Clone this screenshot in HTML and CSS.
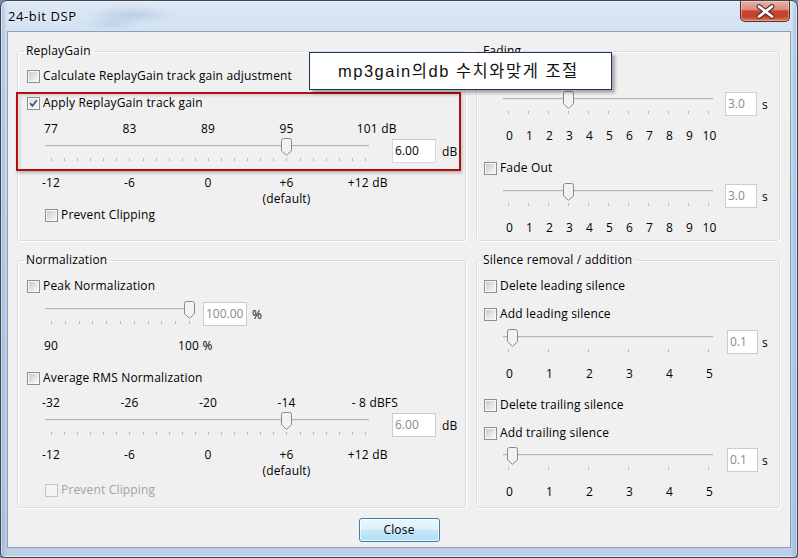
FILE: index.html
```html
<!DOCTYPE html>
<html>
<head>
<meta charset="utf-8">
<title>24-bit DSP</title>
<link rel="stylesheet" href="styles.css">
</head>
<body>
<div class="window">
  <div class="titlebar">
    <span class="title">24-bit DSP</span>
    <div class="xbtn">
      <svg width="50" height="20" viewBox="0 0 50 20">
        <path d="M19 5.5 L32 15.5 M32 5.5 L19 15.5" stroke="#4a2a26" stroke-width="4.8" stroke-linecap="round" fill="none"/>
        <path d="M19 5.5 L32 15.5 M32 5.5 L19 15.5" stroke="#ffffff" stroke-width="2.8" stroke-linecap="round" fill="none"/>
      </svg>
    </div>
  </div>

  <div class="client">
    <div class="groups">
      <!-- ReplayGain -->
      <fieldset class="group gl">
        <legend>ReplayGain</legend>
        <div class="cbrow mt9"><span class="cb"></span>Calculate ReplayGain track gain adjustment</div>
        <div class="cbrow mt11"><span class="cb on"><svg width="9" height="9" viewBox="0 0 9 9"><path d="M1.2 4.2 L3.4 6.8 L7.8 1.2" stroke="#3e4f8c" stroke-width="1.7" fill="none"/></svg></span>Apply ReplayGain track gain</div>
        <div class="scale sc-db mt10">
          <span>77</span><span>83</span><span>89</span><span>95</span><span class="last p31">101 dB</span>
        </div>
        <div class="sliderrow ind">
          <div class="slider sl-db">
            <div class="track"></div>
            <div class="ticks tk-db"></div>
            <svg class="thumb" style="left:236px" width="11" height="18" viewBox="0 0 11 18"><path d="M0.5 2.5 Q0.5 0.5 2.5 0.5 H8.5 Q10.5 0.5 10.5 2.5 V12.8 L5.5 17.3 L0.5 12.8 Z" fill="#f2f2f2" stroke="#8a8a8a"/></svg>
          </div>
          <div class="tbox tb-wide">6.00</div><span class="unit u6">dB</span>
        </div>
        <div class="scale sc-db mt12">
          <span>-12</span><span>-6</span><span>0</span><span>+6<br>(default)</span><span class="last p22">+12 dB</span>
        </div>
        <div class="cbrow ind"><span class="cb"></span>Prevent Clipping</div>
      </fieldset>

      <!-- Fading -->
      <fieldset class="group gr">
        <legend>Fading</legend>
        <div class="cbrow mt9"><span class="cb"></span>Fade In</div>
        <div class="sliderrow ind2 mt6">
          <div class="slider sl-s">
            <div class="track"></div>
            <div class="ticks tk-fade"></div>
            <svg class="thumb" style="left:60px" width="11" height="18" viewBox="0 0 11 18"><path d="M0.5 2.5 Q0.5 0.5 2.5 0.5 H8.5 Q10.5 0.5 10.5 2.5 V12.8 L5.5 17.3 L0.5 12.8 Z" fill="#f2f2f2" stroke="#8a8a8a"/></svg>
          </div>
          <div class="tbox tb-fade dis">3.0</div><span class="unit u5">s</span>
        </div>
        <div class="scale sc-fade mt12">
          <span>0</span><span>1</span><span>2</span><span>3</span><span>4</span><span>5</span><span>6</span><span>7</span><span>8</span><span>9</span><span>10</span>
        </div>
        <div class="cbrow mt16"><span class="cb"></span>Fade Out</div>
        <div class="sliderrow ind2 mt6">
          <div class="slider sl-s">
            <div class="track"></div>
            <div class="ticks tk-fade"></div>
            <svg class="thumb" style="left:60px" width="11" height="18" viewBox="0 0 11 18"><path d="M0.5 2.5 Q0.5 0.5 2.5 0.5 H8.5 Q10.5 0.5 10.5 2.5 V12.8 L5.5 17.3 L0.5 12.8 Z" fill="#f2f2f2" stroke="#8a8a8a"/></svg>
          </div>
          <div class="tbox tb-fade dis">3.0</div><span class="unit u5">s</span>
        </div>
        <div class="scale sc-fade mt12">
          <span>0</span><span>1</span><span>2</span><span>3</span><span>4</span><span>5</span><span>6</span><span>7</span><span>8</span><span>9</span><span>10</span>
        </div>
      </fieldset>

      <!-- Normalization -->
      <fieldset class="group gl">
        <legend>Normalization</legend>
        <div class="cbrow mt10"><span class="cb"></span>Peak Normalization</div>
        <div class="sliderrow ind mt6">
          <div class="slider sl-peak">
            <div class="track"></div>
            <div class="ticks tk-peak"></div>
            <svg class="thumb" style="left:139px" width="11" height="18" viewBox="0 0 11 18"><path d="M0.5 2.5 Q0.5 0.5 2.5 0.5 H8.5 Q10.5 0.5 10.5 2.5 V12.8 L5.5 17.3 L0.5 12.8 Z" fill="#f2f2f2" stroke="#8a8a8a"/></svg>
          </div>
          <div class="tbox tb-peak dis">100.00</div><span class="unit u5">%</span>
        </div>
        <div class="scale sc-peak mt12">
          <span>90</span><span class="last p58">100 %</span>
        </div>
        <div class="cbrow mt16"><span class="cb"></span>Average RMS Normalization</div>
        <div class="scale sc-db mt9">
          <span>-32</span><span>-26</span><span>-20</span><span>-14</span><span class="last p26">- 8 dBFS</span>
        </div>
        <div class="sliderrow ind">
          <div class="slider sl-db">
            <div class="track"></div>
            <div class="ticks tk-db"></div>
            <svg class="thumb" style="left:236px" width="11" height="18" viewBox="0 0 11 18"><path d="M0.5 2.5 Q0.5 0.5 2.5 0.5 H8.5 Q10.5 0.5 10.5 2.5 V12.8 L5.5 17.3 L0.5 12.8 Z" fill="#f2f2f2" stroke="#8a8a8a"/></svg>
          </div>
          <div class="tbox tb-wide dis">6.00</div><span class="unit u6">dB</span>
        </div>
        <div class="scale sc-db mt10">
          <span>-12</span><span>-6</span><span>0</span><span>+6<br>(default)</span><span class="last p22">+12 dB</span>
        </div>
        <div class="cbrow ind mt3 disabled"><span class="cb"></span>Prevent Clipping</div>
      </fieldset>

      <!-- Silence -->
      <fieldset class="group gr">
        <legend>Silence removal / addition</legend>
        <div class="cbrow mt10"><span class="cb"></span>Delete leading silence</div>
        <div class="cbrow mt12"><span class="cb"></span>Add leading silence</div>
        <div class="sliderrow ind2 mt6">
          <div class="slider sl-s">
            <div class="track"></div>
            <div class="ticks tk-sil"></div>
            <svg class="thumb" style="left:4px" width="11" height="18" viewBox="0 0 11 18"><path d="M0.5 2.5 Q0.5 0.5 2.5 0.5 H8.5 Q10.5 0.5 10.5 2.5 V12.8 L5.5 17.3 L0.5 12.8 Z" fill="#f2f2f2" stroke="#8a8a8a"/></svg>
          </div>
          <div class="tbox tb-sil dis">0.1</div><span class="unit u4">s</span>
        </div>
        <div class="scale sc-sil mt12">
          <span>0</span><span>1</span><span>2</span><span>3</span><span>4</span><span>5</span>
        </div>
        <div class="cbrow mt15"><span class="cb"></span>Delete trailing silence</div>
        <div class="cbrow mt12"><span class="cb"></span>Add trailing silence</div>
        <div class="sliderrow ind2 mt5">
          <div class="slider sl-s">
            <div class="track"></div>
            <div class="ticks tk-sil"></div>
            <svg class="thumb" style="left:4px" width="11" height="18" viewBox="0 0 11 18"><path d="M0.5 2.5 Q0.5 0.5 2.5 0.5 H8.5 Q10.5 0.5 10.5 2.5 V12.8 L5.5 17.3 L0.5 12.8 Z" fill="#f2f2f2" stroke="#8a8a8a"/></svg>
          </div>
          <div class="tbox tb-sil dis">0.1</div><span class="unit u4">s</span>
        </div>
        <div class="scale sc-sil mt12">
          <span>0</span><span>1</span><span>2</span><span>3</span><span>4</span><span>5</span>
        </div>
      </fieldset>
    </div>

    <div class="footer">
      <button class="btn">Close</button>
    </div>
  </div>

  <div class="highlight"></div>
  <div class="tooltip">mp3gain의db 수치와맞게 조절</div>
</div>
</body>
</html>
```

FILE: styles.css
```css
html, body {
  margin: 0;
  padding: 0;
}
body {
  width: 798px;
  height: 558px;
  overflow: hidden;
  font-family: "Open Sans", "Noto Sans", sans-serif;
  font-size: 12px;
  letter-spacing: 0.17px;
  line-height: 16px;
  color: #000;
  background: #6f8fb4;
}

.window {
  position: relative;
  box-sizing: border-box;
  width: 798px;
  height: 558px;
  border: 1px solid #3a4656;
  border-radius: 7px 7px 5px 5px;
  background:
    radial-gradient(ellipse 45px 9px at 130px 14px, rgba(140,165,195,0.35), rgba(140,165,195,0) 100%),
    radial-gradient(ellipse 30px 7px at 110px 23px, rgba(150,175,200,0.3), rgba(150,175,200,0) 100%),
    linear-gradient(90deg, rgba(90,125,170,0.35) 0, rgba(90,125,170,0) 6px, rgba(90,125,170,0) 790px, rgba(90,125,170,0.35) 796px),
    linear-gradient(180deg, #dbe7f5 0%, #cfdff1 8%, #c4d7ec 50%, #bcd1e8 100%);
  box-shadow: inset 0 0 0 1px rgba(255,255,255,0.55);
  overflow: hidden;
}

/* title bar */
.titlebar {
  height: 30px;
  display: flex;
  justify-content: space-between;
  align-items: flex-start;
}
.title {
  margin: 7px 0 0 7px;
  font-size: 13px;
  letter-spacing: 0.6px;
  line-height: 16px;
  color: #000;
  text-shadow: 0 0 6px rgba(255,255,255,0.9);
}
.xbtn {
  box-sizing: border-box;
  width: 50px;
  height: 21px;
  margin-right: 7px;
  border: 1px solid #5f2b24;
  border-top: none;
  border-radius: 0 0 5px 5px;
  background: linear-gradient(180deg, #eab0a3 0%, #de8d7b 42%, #c9442d 50%, #c2432c 78%, #da7a62 100%);
  box-shadow: inset 0 0 0 1px rgba(255,255,255,0.35);
}
.xbtn svg {
  display: block;
  margin-left: -1px;
}

/* client area */
.client {
  box-sizing: border-box;
  height: 517px;
  margin: 0 6px;
  border: 1px solid #8aa0b8;
  background: #f0f0f0;
  padding: 12px 10px 5px 9px;
}
.groups {
  display: grid;
  grid-template-columns: 449px 304px;
  grid-template-rows: 197px 255px;
  column-gap: 10px;
  row-gap: 12px;
}
.group {
  margin: 0;
  min-width: 0;
  border: 1px solid #d5dfe5;
  border-radius: 3px;
  padding: 1px 0 0 0;
  box-shadow: 1px 1px 0 #ffffff, inset 1px 1px 0 #ffffff;
}
.group legend {
  padding: 0 2px;
  margin-left: -3px;
  line-height: 14px;
  height: 14px;
}
.gl { padding-left: 9px; }
.gr { padding-left: 7px; }

/* checkbox rows */
.cbrow {
  display: flex;
  align-items: center;
  height: 16px;
  white-space: nowrap;
}
.cb {
  box-sizing: border-box;
  flex: none;
  width: 13px;
  height: 13px;
  margin-right: 3px;
  border: 1px solid #8e8f8f;
  padding: 1px;
  background: linear-gradient(135deg, #c9ccd1 0%, #eeeff0 80%, #f6f6f6 100%) content-box, #f7f7f7;
}
.cb svg { display: block; }
.cb.on {
  background: linear-gradient(135deg, #dfe2e6 0%, #f5f5f5 100%) content-box, #f7f7f7;
}
.disabled { color: #a3a3a3; }
.disabled .cb {
  border-color: #c3c3c3;
  background: #f4f4f4;
}

/* indentation */
.ind { margin-left: 18px; }
.ind2 { margin-left: 19px; }

/* spacing helpers */
.mt3 { margin-top: 3px; }
.mt5 { margin-top: 5px; }
.mt6 { margin-top: 6px; }
.mt9 { margin-top: 9px; }
.mt10 { margin-top: 10px; }
.mt11 { margin-top: 11px; }
.mt12 { margin-top: 12px; }
.mt15 { margin-top: 15px; }
.mt16 { margin-top: 16px; }

/* slider rows */
.sliderrow {
  display: flex;
  align-items: flex-start;
  height: 26px;
}
.slider {
  position: relative;
  flex: none;
  height: 26px;
}
.sl-db { width: 324px; }
.sl-peak { width: 149px; }
.sl-s { width: 210px; }
.track {
  margin-top: 8px;
  height: 1px;
  background: #b3b3b3;
  border-bottom: 1px solid #e6e6e6;
}
.ticks {
  margin-top: 11px;
  height: 3px;
}
.tk-db {
  margin-left: 6px;
  width: 315px;
  background: repeating-linear-gradient(to right, #b9b9b9 0 1px, transparent 1px 13.0833px);
}
.tk-peak {
  margin-left: 6px;
  width: 139px;
  background: repeating-linear-gradient(to right, #b9b9b9 0 1px, transparent 1px 13.8px);
}
.tk-fade {
  margin-left: 5px;
  width: 201px;
  background: repeating-linear-gradient(to right, #b9b9b9 0 1px, transparent 1px 20px);
}
.tk-sil {
  margin-left: 5px;
  width: 201px;
  background: repeating-linear-gradient(to right, #b9b9b9 0 1px, transparent 1px 40px);
}
.thumb {
  position: absolute;
  top: 1px;
  display: block;
}

.tbox {
  box-sizing: border-box;
  flex: none;
  height: 24px;
  margin-top: 2px;
  border: 1px solid #d7dadd;
  border-top-color: #c6c9cc;
  background: #fff;
  padding: 0 2px;
  line-height: 22px;
  letter-spacing: 0;
  color: #000;
}
.tbox.dis { color: #8a8a8a; border-color: #c9cdd1; }
.tb-wide { width: 44px; margin-left: 23px; }
.tb-peak { width: 44px; margin-left: 9px; }
.tb-fade { width: 32px; margin-left: 12px; }
.tb-sil { width: 31px; margin-left: 14px; }
.unit {
  margin-top: 3px;
  line-height: 24px;
}
.u6 { margin-left: 6px; }
.u5 { margin-left: 5px; }
.u4 { margin-left: 4px; }

/* scale labels */
.scale {
  display: grid;
  justify-items: center;
  line-height: 16px;
  white-space: nowrap;
}
.scale span { text-align: center; }
.scale .last { justify-self: start; text-align: left; }
.sc-db {
  margin-left: -15.25px;
  grid-template-columns: repeat(5, 78.5px);
}
.sc-peak {
  margin-left: -45px;
  grid-template-columns: repeat(2, 138px);
}
.sc-fade {
  margin-left: 15.5px;
  grid-template-columns: repeat(11, 20px);
}
.sc-sil {
  margin-left: 5.5px;
  grid-template-columns: repeat(6, 40px);
}
.p31 { padding-left: 31px; }
.p22 { padding-left: 22px; }
.p26 { padding-left: 26px; }
.p58 { padding-left: 58px; }

/* footer */
.footer {
  display: flex;
  justify-content: center;
  margin-top: 10px;
}
.btn {
  box-sizing: border-box;
  width: 81px;
  height: 24px;
  margin: 0 0 0 1px;
  padding: 0;
  border: 1px solid #3c7fb1;
  border-radius: 3px;
  background: linear-gradient(180deg, #ecf6fc 0%, #dcf0fb 48%, #c6e6f8 52%, #b3ddf4 100%);
  box-shadow: inset 0 0 0 1px rgba(255,255,255,0.7);
  font-family: "Open Sans", "Noto Sans", sans-serif;
  font-size: 12px;
  letter-spacing: 0.17px;
  line-height: 20px;
  color: #000;
}

/* annotation overlays */
.highlight {
  position: absolute;
  left: 15px;
  top: 91px;
  width: 445px;
  height: 79px;
  box-sizing: border-box;
  border: 2px solid #b30f12;
  box-shadow: 1px 2px 3px rgba(0,0,0,0.25), inset 2px 2px 3px rgba(0,0,0,0.12);
}
.tooltip {
  position: absolute;
  left: 308px;
  top: 51px;
  width: 303px;
  height: 38px;
  box-sizing: border-box;
  border: 1px solid #1c3558;
  background: #ffffff;
  box-shadow: 3px 3px 3px rgba(0,0,0,0.3);
  padding-left: 28px;
  font-family: "Liberation Sans", "Noto Sans CJK KR", sans-serif;
  font-size: 16.5px;
  letter-spacing: 1.5px;
  line-height: 36px;
  color: #111;
  white-space: nowrap;
}
```
